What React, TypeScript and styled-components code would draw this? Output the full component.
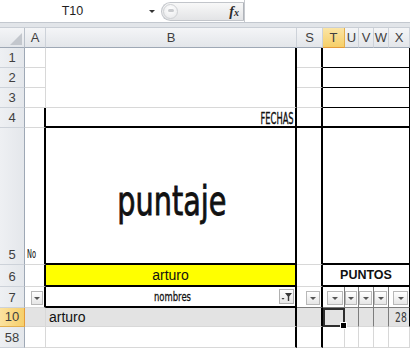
import React from 'react';
import styled, { createGlobalStyle } from 'styled-components';

const GRID = '1px solid #d8d8d8';
const THICK = '2px solid #000';
const THIN = '1px solid #000';
const DARK = '1px solid #7c7c7c';

const GlobalStyle = createGlobalStyle`
  html, body {
    margin: 0;
    padding: 0;
    background: #fff;
  }
  body {
    font-family: "Liberation Sans", Arial, sans-serif;
    overflow: hidden;
  }
`;

const Window = styled.div`
  width: 410px;
  height: 348px;
  display: flex;
  flex-direction: column;
  background: #fff;
  overflow: hidden;
`;

const FormulaBar = styled.div`
  height: 23px;
  flex-shrink: 0;
  display: flex;
  box-sizing: border-box;
  border-bottom: 1px solid #c3c8cf;
  background: #fff;
`;

const NameBox = styled.div`
  width: 159px;
  display: flex;
  align-items: center;
`;

const NameText = styled.div`
  flex: 1;
  text-align: center;
  font-size: 12.5px;
  color: #1e1e1e;
`;

const NameArrow = styled.div`
  width: 14px;
  display: flex;
  justify-content: center;
  &::after {
    content: '';
    border-left: 3px solid transparent;
    border-right: 3px solid transparent;
    border-top: 3px solid #333;
  }
`;

const Pill = styled.div`
  width: 83px;
  height: 19px;
  margin: 2px 0 0 2px;
  box-sizing: border-box;
  border: 1px solid #c2c5ca;
  border-right: 1px solid #b0b4ba;
  border-radius: 10px 0 0 10px;
  background: linear-gradient(#f8f8f8, #e3e4e6);
  display: flex;
  align-items: center;
`;

const Knob = styled.div`
  width: 15px;
  height: 15px;
  margin-left: 1px;
  border-radius: 50%;
  box-sizing: border-box;
  border: 1px solid #cfd1d4;
  background: radial-gradient(circle at 50% 35%, #ffffff, #e6e7e9);
  display: flex;
  align-items: center;
  justify-content: center;
`;

const KnobDot = styled.div`
  width: 6px;
  height: 3px;
  border-radius: 2px;
  background: #c9cbce;
  margin-top: -3px;
`;

const Fx = styled.div`
  margin-left: auto;
  margin-right: 4px;
  font-family: "Liberation Serif", serif;
  font-style: italic;
  font-weight: bold;
  font-size: 14px;
  color: #2a2a2a;
  & > span {
    font-size: 10px;
  }
`;

const FormulaInput = styled.div`
  flex: 1;
  border-left: 1px solid #c6c9ce;
  background: #fff;
`;

const Band = styled.div`
  height: 4px;
  flex-shrink: 0;
  background: #e2e5e9;
  border-bottom: 1px solid #c9ced5;
`;

const Sheet = styled.div`
  display: grid;
  grid-template-columns: 25px 21px 251px 26px 22px 14px 15px 15px 21px;
  grid-template-rows: 20px 20px 20px 20px 20px 137px 22px 21px 19px 21px;
`;

const Corner = styled.div`
  box-sizing: border-box;
  border-right: 1px solid #b9c0c9;
  border-bottom: 1px solid #9ea8b5;
  background: linear-gradient(#f4f5f7, #e3e6ea);
  display: flex;
  justify-content: flex-end;
  align-items: flex-end;
  padding: 0 2px 2px 0;
  &::after {
    content: '';
    border-left: 12px solid transparent;
    border-bottom: 12px solid #c3c7cd;
  }
`;

const ColHead = styled.div<{ $active?: boolean }>`
  box-sizing: border-box;
  border-right: 1px solid ${p => (p.$active ? '#e3b04f' : '#cdd2d9')};
  border-bottom: 1px solid ${p => (p.$active ? '#e39a3a' : '#9ea8b5')};
  background: ${p =>
    p.$active ? 'linear-gradient(#fbe5a6, #f6cf68)' : 'linear-gradient(#f4f5f7, #e3e6ea)'};
  display: flex;
  justify-content: center;
  align-items: center;
  font-size: 13px;
  color: #3f3f3f;
  overflow: hidden;
`;

const RowHead = styled.div<{ $active?: boolean }>`
  box-sizing: border-box;
  border-right: 1px solid ${p => (p.$active ? '#e39a3a' : '#9ea8b5')};
  border-bottom: 1px solid ${p => (p.$active ? '#e3b04f' : '#cdd2d9')};
  background: ${p =>
    p.$active ? 'linear-gradient(90deg, #fbe2a0, #f6cf6a)' : 'linear-gradient(90deg, #eef0f3, #e4e7eb)'};
  display: flex;
  justify-content: center;
  align-items: flex-end;
  padding-bottom: 3px;
  font-size: 13px;
  line-height: 1;
  color: #3f3f3f;
`;

interface CellProps {
  $r?: string;
  $b?: string;
  $bg?: string;
  $justify?: string;
  $align?: string;
  $cols?: number;
  $rows?: number;
}

const Cell = styled.div<CellProps>`
  box-sizing: border-box;
  min-width: 0;
  position: relative;
  grid-column: span ${p => p.$cols ?? 1};
  grid-row: span ${p => p.$rows ?? 1};
  border-right: ${p => p.$r ?? GRID};
  border-bottom: ${p => p.$b ?? GRID};
  background: ${p => p.$bg ?? '#fff'};
  display: flex;
  justify-content: ${p => p.$justify ?? 'flex-start'};
  align-items: ${p => p.$align ?? 'flex-end'};
`;

const SelectedCell = styled(Cell)`
  border: 2px solid #2e2e2e;
`;

const FillHandle = styled.span`
  position: absolute;
  right: -4px;
  bottom: -4px;
  width: 5px;
  height: 5px;
  background: #000;
  border: 1px solid #fff;
  z-index: 2;
`;

const Narrow = styled.span<{ $size: number; $sx: number; $origin?: string; $stroke?: number }>`
  display: inline-block;
  font-family: "DejaVu Sans", sans-serif;
  font-size: ${p => p.$size}px;
  line-height: 1;
  white-space: nowrap;
  color: #111;
  -webkit-text-stroke: ${p => p.$stroke ?? 0.3}px currentColor;
  transform: scaleX(${p => p.$sx});
  transform-origin: ${p => p.$origin ?? 'center'};
`;

const Plain = styled.span<{ $bold?: boolean; $size?: number }>`
  font-family: "Liberation Sans", Arial, sans-serif;
  font-size: ${p => p.$size ?? 14}px;
  font-weight: ${p => (p.$bold ? 'bold' : 'normal')};
  line-height: 1;
  color: #111;
  white-space: nowrap;
`;

const DropButton = styled.div<{ $w?: number }>`
  width: ${p => p.$w ?? 13}px;
  height: 14px;
  box-sizing: border-box;
  margin: 0 1px 2px auto;
  border: 1px solid #b8b8b8;
  background: linear-gradient(#ffffff, #e6e6e6);
  display: flex;
  align-items: center;
  justify-content: center;
  flex-shrink: 0;
  &::after {
    content: '';
    border-left: 3px solid transparent;
    border-right: 3px solid transparent;
    border-top: 3px solid #555;
  }
`;

const FilterButton = styled.div`
  position: absolute;
  right: 1px;
  bottom: 2px;
  width: 15px;
  height: 15px;
  box-sizing: border-box;
  border: 1px solid #b0b0b0;
  background: linear-gradient(#ffffff, #e6e6e6);
  display: flex;
  align-items: center;
  justify-content: center;
`;

const NarrowTail = [
  { key: 'U', w: 12 },
  { key: 'V', w: 13 },
  { key: 'W', w: 13 },
  { key: 'X', w: 15 },
];

export default function App() {
  return (
    <>
      <GlobalStyle />
      <Window>
        <FormulaBar>
          <NameBox>
            <NameText>T10</NameText>
            <NameArrow />
          </NameBox>
          <Pill>
            <Knob>
              <KnobDot />
            </Knob>
            <Fx>
              f<span>x</span>
            </Fx>
          </Pill>
          <FormulaInput />
        </FormulaBar>
        <Band />
        <Sheet>
          <Corner />
          <ColHead>A</ColHead>
          <ColHead>B</ColHead>
          <ColHead>S</ColHead>
          <ColHead $active>T</ColHead>
          <ColHead>U</ColHead>
          <ColHead>V</ColHead>
          <ColHead>W</ColHead>
          <ColHead>X</ColHead>

          {/* rows 1-3 */}
          <RowHead>1</RowHead>
          <Cell />
          <Cell $rows={3} $r={THICK} />
          <Cell $r={THICK} />
          <Cell $cols={5} $b={THIN} $r={THIN} />

          <RowHead>2</RowHead>
          <Cell />
          <Cell $r={THICK} />
          <Cell $cols={5} $b={THIN} $r={THIN} />

          <RowHead>3</RowHead>
          <Cell />
          <Cell $r={THICK} />
          <Cell $cols={5} $b={THIN} $r={THIN} />

          {/* row 4 */}
          <RowHead>4</RowHead>
          <Cell $r={THICK} />
          <Cell $r={THICK} $b={THICK} $justify="flex-end" $align="center">
            <Narrow $size={16} $sx={0.52} $origin="right" $stroke={0.4} style={{ marginRight: 1, marginTop: 3 }}>
              FECHAS
            </Narrow>
          </Cell>
          <Cell $r={THICK} $b={THICK} />
          <Cell $cols={5} $b={THICK} $r={THIN} />

          {/* row 5 */}
          <RowHead>5</RowHead>
          <Cell $r={THICK}>
            <Narrow $size={12} $sx={0.55} $origin="left" $stroke={0.1} style={{ marginLeft: 2, marginBottom: 4 }}>
              No
            </Narrow>
          </Cell>
          <Cell $r={THICK} $b={THICK} $justify="center" $align="center">
            <Narrow $size={41} $sx={0.7} $stroke={0.9} style={{ marginTop: 12, marginLeft: 2 }}>
              puntaje
            </Narrow>
          </Cell>
          <Cell $r={THICK} />
          <Cell $cols={5} $b={THICK} $r={THIN} />

          {/* row 6 */}
          <RowHead>6</RowHead>
          <Cell $r={THICK} />
          <Cell $r={THICK} $b={THICK} $bg="#ffff00" $justify="center" $align="center">
            <Plain>arturo</Plain>
          </Cell>
          <Cell $r={THICK} />
          <Cell $cols={5} $b={THICK} $r={THIN} $justify="center" $align="center">
            <Plain $bold $size={12.5}>
              PUNTOS
            </Plain>
          </Cell>

          {/* row 7 */}
          <RowHead>7</RowHead>
          <Cell $r={THICK}>
            <DropButton $w={12} />
          </Cell>
          <Cell $r={THICK} $b={THICK} $justify="center" $align="center">
            <Narrow $size={13} $sx={0.65} style={{ marginLeft: 3 }}>
              nombres
            </Narrow>
            <FilterButton>
              <svg width="11" height="10" viewBox="0 0 11 10">
                <path d="M4 1 L11 1 L8.2 4.6 L8.2 9 L6.8 9 L6.8 4.6 Z" fill="#3a3a3a" />
                <path d="M0.5 6 L3.5 6 L2 7.8 Z" fill="#3a3a3a" />
              </svg>
            </FilterButton>
          </Cell>
          <Cell $r={THICK} $b={DARK}>
            <DropButton $w={14} />
          </Cell>
          <Cell $r={DARK} $b={DARK}>
            <DropButton $w={16} />
          </Cell>
          {NarrowTail.map(c => (
            <Cell key={c.key} $r={c.key === 'X' ? THIN : DARK} $b={DARK}>
              <DropButton $w={c.w} />
            </Cell>
          ))}

          {/* row 10 */}
          <RowHead $active>10</RowHead>
          <Cell $bg="#e3e3e3" />
          <Cell $r={THICK} $bg="#e3e3e3" $align="center">
            <Plain style={{ marginLeft: 3 }}>arturo</Plain>
          </Cell>
          <Cell $r={THICK} $bg="#e3e3e3" />
          <SelectedCell $bg="#e3e3e3">
            <FillHandle />
          </SelectedCell>
          {NarrowTail.map(c => (
            <Cell
              key={c.key}
              $r={c.key === 'X' ? THIN : DARK}
              $bg="#e3e3e3"
              $justify="flex-end"
              $align="center"
            >
              {c.key === 'X' && (
                <Narrow $size={14} $sx={0.66} $origin="right" $stroke={0} style={{ marginRight: 2, color: '#3a3a3a' }}>
                  28
                </Narrow>
              )}
            </Cell>
          ))}

          {/* row 58 */}
          <RowHead>58</RowHead>
          <Cell />
          <Cell $r={THICK} />
          <Cell $r={THICK} />
          <Cell />
          {NarrowTail.map(c => (
            <Cell key={c.key} />
          ))}
        </Sheet>
      </Window>
    </>
  );
}
